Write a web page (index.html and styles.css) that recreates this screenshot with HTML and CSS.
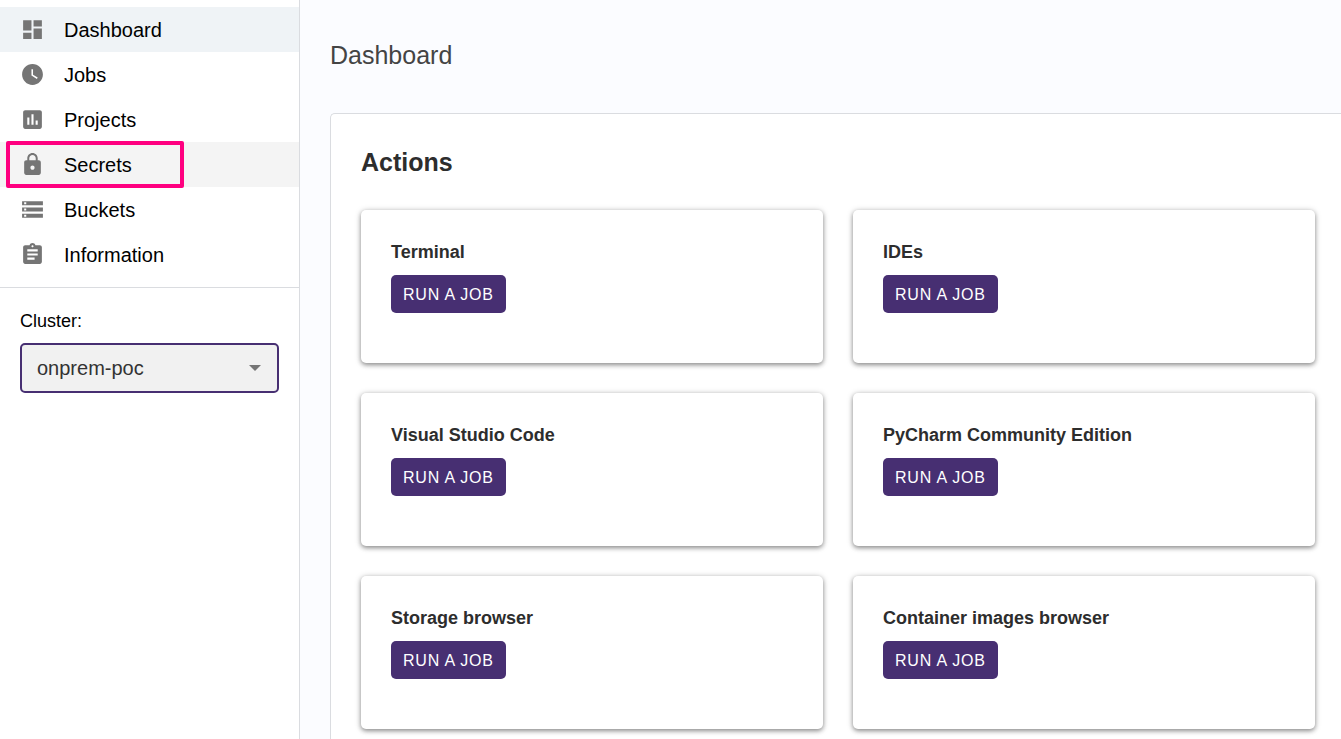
FILE: index.html
```html
<!DOCTYPE html>
<html lang="en">
<head>
<meta charset="utf-8">
<title>Dashboard</title>
<link rel="stylesheet" href="styles.css">
</head>
<body>
<div class="layout">
  <aside class="sidebar">
    <nav class="nav">
      <a class="nav-item nav-item-active" href="#dashboard"><svg class="icon" viewBox="0 0 24 24" aria-hidden="true"><path d="M3 13h8V3H3v10zm0 8h8v-6H3v6zm10 0h8V11h-8v10zm0-18v6h8V3h-8z"/></svg><span class="nav-label">Dashboard</span></a>
      <a class="nav-item" href="#jobs"><svg class="icon" viewBox="0 0 24 24" aria-hidden="true"><path d="M12 2C6.500 2 2 6.500 2 12s4.500 10 10 10 10-4.500 10-10S17.500 2 12 2zm4.200 14.200L11 13V7h1.500v5.200l4.500 2.700-.8 1.300z"/></svg><span class="nav-label">Jobs</span></a>
      <a class="nav-item" href="#projects"><svg class="icon" viewBox="0 0 24 24" aria-hidden="true"><path d="M19 3H5c-1.100 0-2 .9-2 2v14c0 1.100.9 2 2 2h14c1.100 0 2-.9 2-2V5c0-1.100-.9-2-2-2zM9 17H7v-7h2v7zm4 0h-2V7h2v10zm4 0h-2v-4h2v4z"/></svg><span class="nav-label">Projects</span></a>
      <a class="nav-item nav-item-hover" href="#secrets"><svg class="icon" viewBox="0 0 24 24" aria-hidden="true"><path d="M18 8h-1V6c0-2.760-2.240-5-5-5S7 3.240 7 6v2H6c-1.100 0-2 .9-2 2v10c0 1.100.9 2 2 2h12c1.100 0 2-.9 2-2V10c0-1.100-.9-2-2-2zm-6 9c-1.100 0-2-.9-2-2s.9-2 2-2 2 .9 2 2-.9 2-2 2zm3.100-9H8.900V6c0-1.710 1.390-3.100 3.100-3.100 1.710 0 3.100 1.390 3.100 3.100v2z"/></svg><span class="nav-label">Secrets</span><span class="marker"></span></a>
      <a class="nav-item" href="#buckets"><svg class="icon" viewBox="0 0 24 24" aria-hidden="true"><path d="M2 20h20v-4H2v4zm2-3h2v2H4v-2zM2 4v4h20V4H2zm4 3H4V5h2v2zm-4 7h20v-4H2v4zm2-3h2v2H4v-2z"/></svg><span class="nav-label">Buckets</span></a>
      <a class="nav-item" href="#information"><svg class="icon" viewBox="0 0 24 24" aria-hidden="true"><path d="M19 3h-4.180C14.400 1.840 13.300 1 12 1c-1.300 0-2.400.84-2.820 2H5c-1.100 0-2 .9-2 2v14c0 1.100.9 2 2 2h14c1.100 0 2-.9 2-2V5c0-1.100-.9-2-2-2zm-7 0c.55 0 1 .45 1 1s-.45 1-1 1-1-.45-1-1 .45-1 1-1zm2 14H7v-2h7v2zm3-4H7v-2h10v2zm0-4H7V7h10v2z"/></svg><span class="nav-label">Information</span></a>
    </nav>
    <div class="cluster">
      <label class="cluster-label" for="cluster">Cluster:</label>
      <div class="select-wrap">
        <select class="select" id="cluster"><option>onprem-poc</option></select>
        <svg class="select-arrow" viewBox="0 0 12 6" aria-hidden="true"><path d="M0 0h12L6 6z"/></svg>
      </div>
    </div>
  </aside>
  <main class="main">
    <h1 class="page-title">Dashboard</h1>
    <section class="panel">
      <h2 class="panel-title">Actions</h2>
      <div class="cards">
        <article class="card"><h3 class="card-title">Terminal</h3><button class="button" type="button">RUN A JOB</button></article>
        <article class="card"><h3 class="card-title">IDEs</h3><button class="button" type="button">RUN A JOB</button></article>
        <article class="card"><h3 class="card-title">Visual Studio Code</h3><button class="button" type="button">RUN A JOB</button></article>
        <article class="card"><h3 class="card-title">PyCharm Community Edition</h3><button class="button" type="button">RUN A JOB</button></article>
        <article class="card"><h3 class="card-title">Storage browser</h3><button class="button" type="button">RUN A JOB</button></article>
        <article class="card"><h3 class="card-title">Container images browser</h3><button class="button" type="button">RUN A JOB</button></article>
      </div>
    </section>
  </main>
</div>
</body>
</html>
```
FILE: styles.css
```css
* { box-sizing: border-box; }

body {
  margin: 0;
  font-family: "Liberation Sans", Arial, sans-serif;
  color: #2d2d2d;
  background: #fbfcff;
}

.layout { display: flex; height: 100vh; }

.sidebar {
  flex: 0 0 300px;
  padding-top: 7px;
  background: #fff;
  border-right: 1px solid #dadce0;
}

.nav { padding-bottom: 10px; border-bottom: 1px solid #dadce0; }

.nav-item {
  position: relative;
  display: flex;
  align-items: center;
  gap: 19px;
  height: 45px;
  padding: 0 20px;
  font-size: 20px;
  color: #000;
  text-decoration: none;
}

.nav-item-active { background: #eff3f6; }
.nav-item-hover { background: #f4f4f4; }

.nav-label { padding-top: 2px; }

.icon { width: 25px; height: 25px; fill: #757575; }

.marker {
  position: absolute;
  top: -1px;
  bottom: -1px;
  left: 6px;
  width: 178px;
  border: 4px solid #ff0080;
  border-radius: 2px;
}

.cluster {
  display: flex;
  flex-direction: column;
  gap: 10px;
  padding: 21px 20px;
}

.cluster-label { font-size: 18px; line-height: 24px; color: #000; }

.select-wrap { position: relative; }

.select {
  display: block;
  width: 100%;
  height: 50px;
  padding: 0 40px 0 15px;
  appearance: none;
  font: inherit;
  font-size: 20px;
  color: #333;
  background: #f1f1f1;
  border: 2px solid #472f72;
  border-radius: 5px;
}

.select-arrow {
  position: absolute;
  top: 22px;
  right: 18px;
  width: 12px;
  height: 6px;
  fill: #757575;
  pointer-events: none;
}

.main {
  flex: 1;
  min-width: 0;
  padding: 37px 0 0 30px;
  overflow-y: auto;
  scrollbar-width: none;
}

.page-title {
  margin: 0 0 40px;
  font-size: 25px;
  font-weight: 400;
  line-height: 36px;
  color: #444;
}

.panel {
  padding: 30px 26px 30px 30px;
  background: #fff;
  border: 1px solid #dadce0;
  border-right: 0;
  border-radius: 5px 0 0 0;
}

.panel-title { margin: 0 0 30px; font-size: 25px; line-height: 36px; }

.cards {
  display: grid;
  grid-template-columns: 1fr 1fr;
  gap: 30px;
}

.card {
  display: flex;
  flex-direction: column;
  align-items: flex-start;
  gap: 10px;
  padding: 30px 30px 50px;
  background: #fff;
  border-radius: 5px;
  box-shadow: 0 1px 6px rgba(0, 0, 0, 0.25), 0 2px 4px rgba(0, 0, 0, 0.3);
}

.card-title { margin: 0; font-size: 18px; line-height: 25px; }

.button {
  height: 38px;
  padding: 2px 12px 0;
  font-family: inherit;
  font-size: 16px;
  letter-spacing: 0.05em;
  color: #fff;
  background: #472f72;
  border: 0;
  border-radius: 5px;
}
```
